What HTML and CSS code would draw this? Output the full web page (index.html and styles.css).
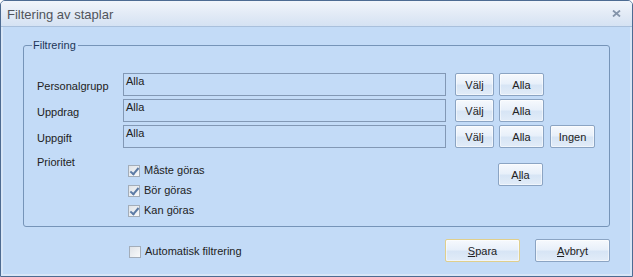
FILE: index.html
```html
<!DOCTYPE html>
<html lang="sv">
<head>
  <meta charset="UTF-8" />
  <title>Filtering av staplar</title>
  <link rel="stylesheet" href="styles.css">
</head>
<body>
  <div class="fonster">
    <div class="titelrad">
      <span class="titel">Filtering av staplar</span>
      <svg class="stang" width="9" height="7" viewBox="0 0 9 7">
        <path d="M1 0.5 L8 6.5 M8 0.5 L1 6.5" stroke="#8494aa" stroke-width="1.8" fill="none" />
      </svg>
    </div>

    <div class="innehall">
      <fieldset class="grupp">
        <legend>Filtrering</legend>

        <div class="rad">
          <span class="etikett">Personalgrupp</span>
          <div class="falt">Alla</div>
          <button class="knapp smal">Välj</button>
          <button class="knapp">Alla</button>
        </div>
        <div class="rad">
          <span class="etikett">Uppdrag</span>
          <div class="falt">Alla</div>
          <button class="knapp smal">Välj</button>
          <button class="knapp">Alla</button>
        </div>
        <div class="rad">
          <span class="etikett">Uppgift</span>
          <div class="falt">Alla</div>
          <button class="knapp smal">Välj</button>
          <button class="knapp">Alla</button>
          <button class="knapp">Ingen</button>
        </div>

        <div class="prio">
          <span class="etikett prio-etikett">Prioritet</span>
          <div class="val">
            <label class="kryss"><span class="ruta ikryssad"></span>Måste göras</label>
            <label class="kryss"><span class="ruta ikryssad"></span>Bör göras</label>
            <label class="kryss"><span class="ruta ikryssad"></span>Kan göras</label>
          </div>
          <button class="knapp prio-alla">A<u>l</u>la</button>
        </div>
      </fieldset>

      <div class="fot">
        <label class="kryss"><span class="ruta"></span>Automatisk filtrering</label>
        <button class="knapp stor standard"><u>S</u>para</button>
        <button class="knapp stor"><u>A</u>vbryt</button>
      </div>
    </div>
  </div>
</body>
</html>
```

FILE: styles.css
```css
* {
  margin: 0;
  padding: 0;
  box-sizing: border-box;
}
html, body {
  background: #ffffff;
  font-family: "Liberation Sans", Arial, sans-serif;
  font-size: 11px;
  line-height: 13px;
  color: #222;
}
.fonster {
  width: 633px;
  height: 277px;
  border: 1px solid #4d6b92;
  border-radius: 5px 5px 0 0;
  background: #c3dbf7;
  box-shadow: inset 2px 0 0 #d8e6f7, inset -2px 0 0 #d8e6f7, inset 0 -2px 0 #d8e6f7;
  overflow: hidden;
}
.titelrad {
  height: 26px;
  display: flex;
  align-items: center;
  justify-content: space-between;
  padding: 0 11px 0 6px;
  background: linear-gradient(#f1f5fb, #e3ebf6 50%, #d5e2f3);
  border-bottom: 1px solid #a9c0dc;
}
.titel {
  font-size: 13px;
  color: #50545b;
  padding-top: 2px;
}
.innehall {
  padding: 12px 22px 0 22px;
}
.grupp {
  border: 1px solid #7694b8;
  border-radius: 3px;
  padding: 21px 0 11px 8px;
  height: 188px;
}
.grupp legend {
  padding: 0 2px 0 1px;
  color: #1d3557;
}
.rad {
  display: flex;
  align-items: flex-start;
  height: 23px;
  margin-bottom: 3px;
}
.etikett {
  width: 91px;
  padding: 7px 0 0 5px;
}
.falt {
  width: 323px;
  height: 23px;
  border: 1px solid #8298b5;
  padding: 1px 0 0 2px;
  margin-right: 9px;
}
.knapp {
  height: 23px;
  width: 45px;
  margin-right: 6px;
  font-family: "Liberation Sans", Arial, sans-serif;
  font-size: 11px;
  color: #222;
  border: 1px solid #8ba4c3;
  border-radius: 2px;
  background: linear-gradient(#f6f9fd, #e8f0fa 45%, #d7e5f5 55%, #e2ecf8);
  box-shadow: inset 0 0 0 1px rgba(255, 255, 255, 0.5);
}
.knapp.smal {
  width: 39px;
  margin-right: 5px;
}
.knapp u {
  text-decoration: underline;
}
.prio {
  display: flex;
  align-items: flex-start;
  margin-top: 6px;
}
.prio-etikett {
  padding-top: 2px;
}
.val {
  display: flex;
  flex-direction: column;
  gap: 7px;
  padding: 10px 0 0 5px;
  width: 375px;
}
.kryss {
  display: flex;
  align-items: center;
  gap: 4px;
  height: 13px;
}
.ruta {
  width: 12px;
  height: 12px;
  border: 1px solid #a3adb9;
  background: linear-gradient(135deg, #dfe3e8, #f8f9fa);
  position: relative;
}
.ruta.ikryssad::after {
  content: "";
  position: absolute;
  left: 3px;
  top: 0px;
  width: 3px;
  height: 7px;
  border: solid #5d7ca6;
  border-width: 0 2px 2px 0;
  transform: rotate(40deg);
}
.prio-alla {
  margin-top: 9px;
  height: 23px;
}
.fot {
  display: flex;
  align-items: center;
  padding: 12px 0 0 106px;
}
.fot .kryss {
  flex: 1;
  margin-top: 2px;
}
.knapp.stor {
  width: 75px;
  margin: 0 0 0 15px;
}
.knapp.standard {
  border-color: #e0cf8c;
  margin: 0;
}
```
